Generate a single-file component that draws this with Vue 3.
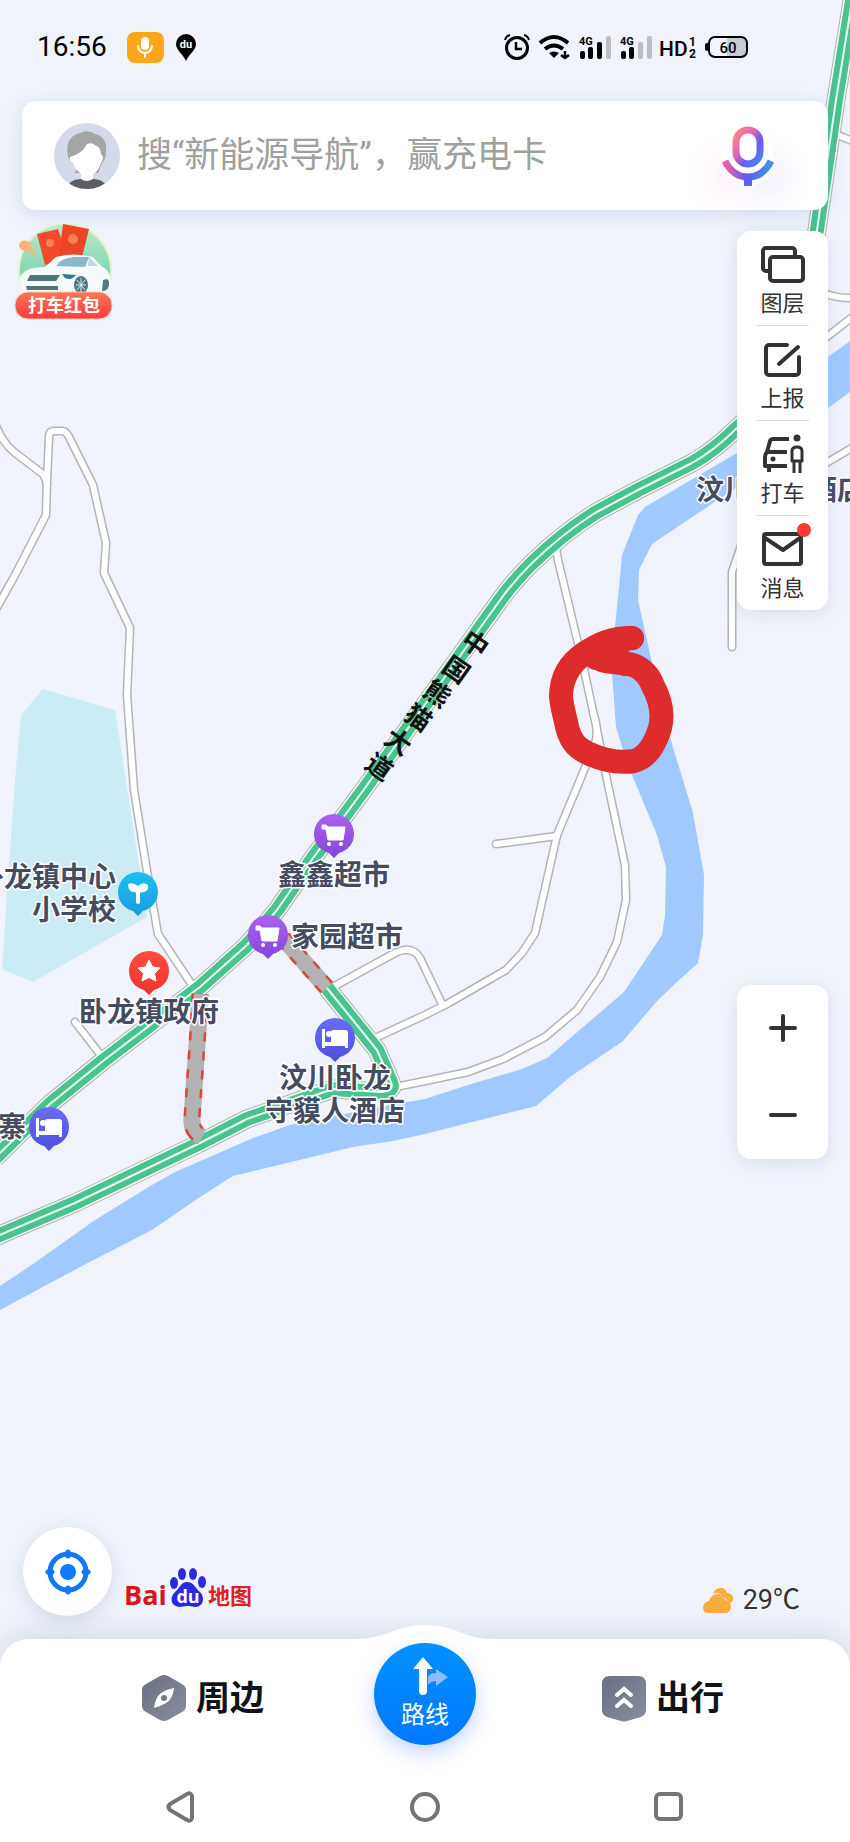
<script setup>
import { ref } from 'vue'

const keyword = ref('')

// 河流与学校区域
const river = '850,341 828,357 737,453 645,507 638,515 622,555 621,567 615,627 612,673 616,727 623,750 632,775 657,835 666,867 665,915 662,935 624,992 547,1058 522,1069 468,1085 425,1099 390,1105 290,1125 253,1138 175,1172 152,1185 95,1220 33,1264 0,1286 0,1310 80,1267 152,1230 197,1199 233,1176 353,1147 393,1141 425,1134 536,1106 570,1077 623,1041 657,1001 677,982 698,963 703,935 704,875 693,813 683,780 673,748 653,667 638,600 639,570 652,544 737,487 828,408 850,392'
const campus = '43,689 115,710 147,917 33,982 2,969 15,780 21,715'

// 小路
const lanes = [
  'M-4 426 Q3 443 14 452 L44 475 L47 484',
  'M-5 611 L14 577 L46 515 L47 480 L49 437 Q49 431 54 431 L62 431 Q66 431 69 437 L93 485 L106 543 L104 573 L130 628 L127 695 L134 790 L147 871 L158 934 L190 982',
  'M75 1022 L103 1058',
  'M556 548 L558 560 L582 660 L597 730 L607 780 L625 865 L626 900 L617 942 L600 977 L577 1010 L545 1037 L503 1059 L468 1072 L425 1081 L395 1087',
  'M594 715 Q599 733 595 743 L580 780 L557 835 L535 933 L522 953 L506 970 L447 1004 L425 1015 L373 1039',
  'M496 844 L557 836',
  'M333 987 L393 954 Q412 944 420 958 L442 1004',
  'M732 647 L732 572 L742 543',
  'M760 500 L828 462 L855 446',
  'M835 134 L855 142',
  'M815 290 Q835 299 855 298',
  'M800 358 L828 336 L855 315'
]

// 主干道
const highways = [
  'M853 -5 L836 100 L817 230 L790 360 Q770 400 737 428 Q715 450 692 463 L638 490 L595 513 Q562 534 532 563 Q512 583 498 603 L475 635 L365 788 L337 826 L313 858 L277 910 L247 945 L200 987 L103 1061 L50 1104 L-5 1158',
  'M-5 1237 L75 1203 L198 1144 L247 1119 L333 1089 L380 1092 Q395 1092 391 1082 L377 1050 L327 988'
]

// 封闭路段
const closed = [
  'M283 938 L327 988',
  'M200 994 L198 1030 L192 1118 Q191 1131 202 1137'
]

const roadName = [
  { char: '中', x: 475, y: 644 },
  { char: '国', x: 456, y: 670 },
  { char: '熊', x: 437, y: 694 },
  { char: '猫', x: 418, y: 718 },
  { char: '大', x: 398, y: 742 },
  { char: '道', x: 379, y: 767 }
]

const labels = [
  { text: '鑫鑫超市', x: 334, y: 885, anchor: 'middle' },
  { text: '家园超市', x: 291, y: 947, anchor: 'start' },
  { text: '卧龙镇中心', x: 116, y: 887, anchor: 'end' },
  { text: '小学校', x: 116, y: 920, anchor: 'end' },
  { text: '卧龙镇政府', x: 149, y: 1022, anchor: 'middle' },
  { text: '汶川卧龙', x: 335, y: 1088, anchor: 'middle' },
  { text: '守貘人酒店', x: 335, y: 1121, anchor: 'middle' },
  { text: '寨', x: 26, y: 1137, anchor: 'end' },
  { text: '汶川', x: 696, y: 500, anchor: 'start' },
  { text: '酒店', x: 809, y: 500, anchor: 'start' }
]

const pins = [
  { type: 'cart', x: 334, y: 834 },
  { type: 'cart', x: 268, y: 935 },
  { type: 'school', x: 138, y: 892 },
  { type: 'star', x: 149, y: 971 },
  { type: 'bed', x: 335, y: 1038 },
  { type: 'bed', x: 49, y: 1127 }
]

const tools = [
  { id: 'layers', name: '图层' },
  { id: 'report', name: '上报' },
  { id: 'taxi', name: '打车' },
  { id: 'message', name: '消息' }
]
</script>

<template>
  <div class="app">
    <!-- 地图 -->
    <svg class="map" viewBox="0 0 850 1842" preserveAspectRatio="xMidYMin slice">
      <defs>
        <linearGradient id="pin-cart" x1="0" y1="0" x2="0" y2="1">
          <stop offset="0" stop-color="#ac60f0" />
          <stop offset="1" stop-color="#8248d8" />
        </linearGradient>
        <linearGradient id="pin-school" x1="0" y1="0" x2="0" y2="1">
          <stop offset="0" stop-color="#1cc0ee" />
          <stop offset="1" stop-color="#1b9be0" />
        </linearGradient>
        <linearGradient id="pin-star" x1="0" y1="0" x2="0" y2="1">
          <stop offset="0" stop-color="#ff4c40" />
          <stop offset="1" stop-color="#ef3430" />
        </linearGradient>
        <linearGradient id="pin-bed" x1="0" y1="0" x2="0" y2="1">
          <stop offset="0" stop-color="#696cf8" />
          <stop offset="1" stop-color="#4c50dc" />
        </linearGradient>
      </defs>

      <polygon class="campus" :points="campus" />
      <polygon class="river" :points="river" />

      <path v-for="d in lanes" :key="'c' + d" class="lane-case" :d="d" />
      <path v-for="d in highways" :key="'c' + d" class="road-case" :d="d" />
      <path v-for="d in lanes" :key="'f' + d" class="lane" :d="d" />
      <path v-for="d in highways" :key="'w' + d" class="road-edge" :d="d" />
      <path v-for="d in highways" :key="'g' + d" class="road" :d="d" />
      <path v-for="d in highways" :key="'l' + d" class="road-line" :d="d" />
      <path v-for="d in closed" :key="'b' + d" class="closed-base" :d="d" />
      <path v-for="d in closed" :key="'r' + d" class="closed-dash" :d="d" />
      <path v-for="d in closed" :key="'f' + d" class="closed" :d="d" />

      <text
        v-for="item in roadName"
        :key="item.char"
        class="road-name"
        text-anchor="middle"
        :transform="`translate(${item.x} ${item.y}) rotate(35)`"
        dy="9"
      >{{ item.char }}</text>

      <text
        v-for="item in labels"
        :key="item.text"
        class="label"
        :x="item.x"
        :y="item.y"
        :text-anchor="item.anchor"
      >{{ item.text }}</text>

      <g v-for="(pin, i) in pins" :key="i" :transform="`translate(${pin.x} ${pin.y})`">
        <path :fill="`url(#pin-${pin.type})`" d="M-20 0 A20 20 0 1 1 20 0 C20 10 13 17 5 19 L0 24 L-5 19 C-13 17 -20 10 -20 0Z" />
        <g v-if="pin.type === 'cart'" fill="#fff">
          <path d="M-12 -9 H-8 L-6 -7 H11 L9 6 H-6 L-8 -5 H-12Z" stroke="#fff" stroke-width="1" stroke-linejoin="round" />
          <circle cx="-5" cy="10" r="2" />
          <circle cx="7" cy="10" r="2" />
        </g>
        <g v-else-if="pin.type === 'bed'" fill="#fff">
          <path d="M-13 -9 H-10 V4 H-4 V-6 Q-4 -8 -2 -8 H10 Q13 -8 13 -5 V10 H10 V8 H-10 V10 H-13Z" />
          <circle cx="-6" cy="-4" r="3" />
        </g>
        <g v-else-if="pin.type === 'school'">
          <path d="M-10 -8 Q-5 -10 0 -6 Q5 -11 10 -7 Q11 -1 6 0 Q2 1 0 0 Q-10 2 -10 -8Z" fill="#fff" />
          <path d="M0 -2 V10" stroke="#fff" stroke-width="4" stroke-linecap="round" />
        </g>
        <path v-else d="M0 -11 L3.5 -4 L11 -3 L5.500 2.500 L7 10 L0 6.500 L-7 10 L-5.500 2.500 L-11 -3 L-3.500 -4Z" fill="#fff" stroke="#fff" stroke-linejoin="round" />
      </g>

      <path class="scribble" d="M632 638 C612 638 600 643 585 653 C567 665 561 680 561 697 C562 708 565 716 567 727 C571 742 577 749 592 755 C606 761 620 763 634 761 C648 757 655 744 660 728 C664 712 659 697 653 686 C649 674 637 663 625 664 C615 662 608 662 602 660" />
      <path class="scribble" d="M590 652 Q610 640 632 638 M596 658 L622 661" />
    </svg>

    <header class="status">
      <span class="time">16:56</span>
      <svg class="rec" width="37" height="31" viewBox="0 0 37 31">
        <rect width="37" height="31" rx="8" fill="#fca61c" />
        <rect x="14" y="5" width="8" height="13" rx="4" fill="#fff" />
        <path d="M11 14 a7 7 0 0 0 14 0 M18 21 V25" fill="none" stroke="#fff" stroke-width="2" stroke-linecap="round" />
      </svg>
      <svg width="20" height="27" viewBox="0 0 20 27">
        <path d="M0 10 A10 10 0 0 1 20 10 C20 16 13 20 10 27 C7 20 0 16 0 10Z" />
        <text x="10" y="14" class="du-mini" text-anchor="middle">du</text>
      </svg>
      <div class="signals">
        <svg width="26" height="26" viewBox="0 0 26 26" fill="none" stroke="#000">
          <circle cx="13" cy="14" r="10.500" stroke-width="3" />
          <path d="M12 8 V15 H18" stroke-width="2.500" />
          <path d="M1 6 Q2 2 6 1 M20 1 Q24 2 25 6" stroke-width="2" />
        </svg>
        <svg width="31" height="26" viewBox="0 0 31 26" fill="none" stroke="#000" stroke-width="4">
          <path d="M1 9 Q15 -3 29 9" />
          <path d="M6 15 Q15 8 24 15" />
          <path d="M10 19 Q15 16 20 19 L15 24Z" fill="#000" stroke="none" />
          <path d="M26 17 V23 M22 21 L26 24 L30 21" stroke-width="2.500" />
        </svg>
        <svg v-for="bars in [3, 2]" :key="bars" width="32" height="26" viewBox="0 0 32 26">
          <text x="0" y="11" class="net">4G</text>
          <rect x="1" y="17" width="5" height="8" rx="2" />
          <rect x="9" y="13" width="5" height="12" rx="2" />
          <rect x="18" y="8" width="5" height="17" rx="2" :fill="bars > 2 ? '#000' : '#bdbec4'" />
          <rect x="27" y="2" width="5" height="23" rx="2" fill="#bdbec4" />
        </svg>
        <svg width="35" height="26" viewBox="0 0 35 26">
          <text x="-2" y="22" class="hd">HD</text>
          <text x="28" y="12" class="sim">1</text>
          <text x="28" y="24" class="sim">2</text>
        </svg>
        <svg width="44" height="24" viewBox="0 0 44 24">
          <path d="M22 3 H36 Q41 3 41 8 V16 Q41 21 36 21 H22Z" fill="#c9cad0" />
          <rect x="4" y="2" width="38" height="20" rx="6" fill="none" stroke="#000" stroke-width="2" />
          <rect x="0" y="8" width="4" height="8" rx="2" />
          <text x="23" y="18" class="battery" text-anchor="middle">60</text>
        </svg>
      </div>
    </header>

    <form class="search" @submit.prevent>
      <svg class="avatar" viewBox="0 0 66 66">
        <defs>
          <clipPath id="avatar-clip"><circle cx="33" cy="33" r="33" /></clipPath>
        </defs>
        <g clip-path="url(#avatar-clip)">
          <rect width="66" height="66" fill="#d4daea" />
          <path d="M12 66 Q16 56 26 56 H40 Q50 56 54 66Z" fill="#5c5d5f" />
          <path d="M14 34 Q10 14 26 10 Q34 6 41 11 Q54 14 52 30 Q52 36 48 40 L44 50 H20 Q25 47 20 42 Q16 38 14 34Z" fill="#a5a5a5" />
          <path d="M16 34 Q28 31 33 21 Q39 19 42 23 Q46 23 47 31 Q51 34 47 40 Q44 49 39 51 V56 Q33 60 27 56 V51 Q20 45 19 40 Q15 38 16 34Z" fill="#fff" />
        </g>
      </svg>
      <input v-model="keyword" type="text" aria-label="搜索" placeholder="搜“新能源导航”，赢充电卡">
      <button class="voice" type="button" aria-label="语音">
        <svg width="52" height="60" viewBox="0 0 52 60" fill="none">
          <defs>
            <linearGradient id="mic" x1="0" y1="0" x2="1" y2="1">
              <stop offset="0" stop-color="#ff8a80" />
              <stop offset=".35" stop-color="#e866b0" />
              <stop offset=".65" stop-color="#6a5af5" />
              <stop offset="1" stop-color="#3e8ef0" />
            </linearGradient>
            <linearGradient id="mic-base" x1="0" y1="0" x2="1" y2="0">
              <stop offset="0" stop-color="#f060a8" />
              <stop offset=".45" stop-color="#6756f0" />
              <stop offset="1" stop-color="#3e96e8" />
            </linearGradient>
          </defs>
          <rect x="14" y="4" width="24" height="34" rx="12" stroke="url(#mic)" stroke-width="7" />
          <path d="M3 35 Q11 51 26 51 Q41 51 49 35" stroke="url(#mic-base)" stroke-width="7" />
          <rect x="22" y="52" width="8" height="8" fill="#5a63f3" />
        </svg>
      </button>
    </form>

    <main class="body">
      <button class="promo" type="button">
        <svg width="100" height="100" viewBox="0 0 100 100">
          <defs>
            <linearGradient id="promo-bg" x1="0" y1="0" x2="0" y2="1">
              <stop offset="0" stop-color="#bdeac8" />
              <stop offset="1" stop-color="#4fc5a4" />
            </linearGradient>
            <linearGradient id="ribbon" x1="0" y1="0" x2="0" y2="1">
              <stop offset="0" stop-color="#ff7553" />
              <stop offset="1" stop-color="#f93d3f" />
            </linearGradient>
          </defs>
          <circle cx="52" cy="49" r="46" fill="url(#promo-bg)" stroke="#e0f3c8" stroke-width="2" />
          <path d="M6 24 Q8 18 14 20 Q18 21 18 25 L24 34 L12 30 Q6 29 6 24Z" fill="#fbb578" />
          <path d="M24 13 L45 8 L55 38 L32 44Z" fill="#f4492f" />
          <path d="M50 3 L76 8 L68 40 L46 34Z" fill="#ee4526" />
          <circle cx="37" cy="22" r="4" fill="#fb8152" />
          <circle cx="60" cy="18" r="5" fill="#fb8152" />
          <path d="M8 54 Q14 46 32 46 L43 36 Q60 31 80 36 L88 45 Q99 50 98 63 L92 72 H10 Q5 62 8 54Z" fill="#f4fbfa" />
          <path d="M43 45 Q48 37 61 36 L76 36 L72 46Z" fill="#89b8c6" />
          <path d="M76 36 L85 45 H75Z" fill="#bddade" />
          <path d="M17 54 H47 L43 60 H14Z M13 65 H45 V69 H14Z" fill="#50757b" />
          <path d="M49 53 L63 54 Q58 60 52 57Z" fill="#287d89" />
          <ellipse cx="68" cy="64" rx="7" ry="9" fill="#4c7680" />
          <path d="M68 57 V71 M63 64 H73 M64 59 L72 69 M72 59 L64 69" stroke="#dce9e9" stroke-width="1" />
          <path d="M90 59 Q97 56 96 64 Q95 70 89 70Z" fill="#547a82" />
          <rect x="2" y="71" width="97" height="27" rx="13" fill="url(#ribbon)" stroke="#ffc8a8" stroke-width="1" />
          <text x="51" y="91" class="promo-text" text-anchor="middle">打车红包</text>
        </svg>
      </button>

      <div class="side">
        <nav class="card tools">
          <button v-for="tool in tools" :key="tool.id" class="tool" type="button">
            <svg width="46" height="40" viewBox="0 0 46 40" fill="none" stroke="#333" stroke-width="4" stroke-linecap="round" stroke-linejoin="round">
              <g v-if="tool.id === 'layers'">
                <path d="M9 26 H6 a3 3 0 0 1 -3 -3 V6 a3 3 0 0 1 3 -3 H32 a3 3 0 0 1 3 3 V11" />
                <rect x="10" y="12" width="33" height="24" rx="3" />
              </g>
              <g v-else-if="tool.id === 'report'">
                <path d="M27 5 H9 a3 3 0 0 0 -3 3 V32 a3 3 0 0 0 3 3 H36 a3 3 0 0 0 3 -3 V17" />
                <path d="M19 24 L38 7" />
              </g>
              <g v-else-if="tool.id === 'taxi'" stroke-linecap="butt">
                <path d="M29 4 H13 Q11 4 10 6 L7 17 Q5 19 5 22 V31 H27 M8 17 H27 M9 31 V37" />
                <circle cx="13" cy="24" r="2.500" fill="#333" stroke="none" />
                <circle cx="37" cy="3" r="3.500" fill="#333" stroke="none" />
                <path d="M34 38 V26 H32 V16 Q32 12 37 12 Q42 12 42 16 V26 H40 V38 M34 26 H40" stroke-width="3" />
              </g>
              <g v-else>
                <rect x="4" y="4" width="37" height="30" rx="2" />
                <path d="M5 8 L23 20 L40 8" />
                <circle cx="44" cy="0" r="7" fill="#fb3b32" stroke="none" />
              </g>
            </svg>
            <span>{{ tool.name }}</span>
          </button>
        </nav>

        <div class="card zoom">
          <button type="button" aria-label="放大">
            <svg width="28" height="28" viewBox="0 0 28 28"><path d="M2 14 H26 M14 2 V26" /></svg>
          </button>
          <button type="button" aria-label="缩小">
            <svg width="28" height="28" viewBox="0 0 28 28"><path d="M2 14 H26" /></svg>
          </button>
        </div>
      </div>
    </main>

    <div class="bottom-row">
      <button class="locate" type="button" aria-label="定位">
        <svg width="46" height="46" viewBox="0 0 46 46" fill="none" stroke="#1278f5">
          <circle cx="23" cy="23" r="18" stroke-width="5" />
          <circle cx="23" cy="23" r="8" fill="#0f7bff" stroke="none" />
          <path d="M23 3 V7 M23 39 V43 M3 23 H7 M39 23 H43" stroke-width="5" stroke-linecap="round" />
        </svg>
      </button>
      <svg class="logo" width="128" height="40" viewBox="0 0 128 40">
        <text x="-1" y="37" class="logo-bai">Bai</text>
        <g fill="#2929e0">
          <ellipse cx="49" cy="15" rx="4" ry="6" />
          <ellipse cx="57" cy="6" rx="4" ry="6" />
          <ellipse cx="68" cy="6" rx="4" ry="6" />
          <ellipse cx="77" cy="14" rx="4" ry="6" />
          <path d="M62 14 C69 14 70 20 75 24 C80 29 79 38 71 39 C67 39 66 38 63 38 C59 38 58 39 54 39 C46 38 44 30 50 24 C55 20 56 14 62 14Z" />
        </g>
        <text x="63" y="35" class="logo-du" text-anchor="middle">du</text>
        <text x="83" y="36" class="logo-map">地图</text>
      </svg>
      <div class="weather">
        <svg width="31" height="27" viewBox="0 0 31 27" fill="#fbac3c">
          <path d="M10 7 Q12 0 19 1 Q23 2 24 6 Q31 7 30 13 Q29 16 26 16 Q24 11 20 10 Q16 4 10 7Z" />
          <path d="M6 14 Q8 7 15 7 Q20 8 22 13 Q28 14 28 20 Q27 26 22 26 H6 Q0 26 0 20 Q1 15 6 14Z" />
        </svg>
        <span>29℃</span>
      </div>
    </div>

    <footer class="sheet">
      <svg class="bump" width="140" height="14" viewBox="0 0 140 14">
        <path d="M0 14 C34 14 38 0 70 0 C102 0 106 14 140 14Z" fill="#fff" />
      </svg>
      <nav class="tabs">
        <button class="tab nearby" type="button">
          <svg width="44" height="48" viewBox="0 0 44 48">
            <defs>
              <linearGradient id="slate" x1="0" y1="0" x2="1" y2="1">
                <stop offset="0" stop-color="#6b7080" />
                <stop offset="1" stop-color="#898e9f" />
              </linearGradient>
            </defs>
            <path d="M18 2 Q22 0 26 2 L40 10 Q44 12 44 16 V32 Q44 36 40 38 L26 46 Q22 48 18 46 L4 38 Q0 36 0 32 V16 Q0 12 4 10Z" fill="url(#slate)" />
            <path d="M32 14 Q31 25 24 29 Q19 32 12 34 Q13 24 19 19 Q25 15 32 14Z" fill="#fff" />
            <circle cx="22" cy="24" r="3" fill="#747989" />
          </svg>
          周边
        </button>
        <button class="route" type="button">
          <svg width="48" height="38" viewBox="-11 0 48 38">
            <path d="M16 20 Q18 16 24 16 V12 L36 20 L24 29 V24 Q19 24 16 28Z" fill="#8bbdff" />
            <path d="M11 0 L21 12 H15 V34 Q15 38 11 38 Q7 38 7 34 V12 H1Z" fill="#fff" />
          </svg>
          <span>路线</span>
        </button>
        <button class="tab" type="button">
          <svg width="44" height="48" viewBox="0 0 44 48">
            <path d="M8 2 H36 Q44 2 44 10 V36 Q44 41 39 43 L25 47 Q22 48 19 47 L5 43 Q0 41 0 36 V10 Q0 2 8 2Z" fill="url(#slate)" />
            <path d="M15 21 L22 15 L29 21 M15 32 L22 26 L29 32" fill="none" stroke="#fff" stroke-width="4" stroke-linecap="round" />
          </svg>
          出行
        </button>
      </nav>
      <div class="system">
        <button type="button" aria-label="返回">
          <svg width="32" height="32" viewBox="0 0 32 32"><path d="M27 5 V27 Q26 31 22 29 L5 19 Q2 16 5 13 L22 3 Q26 1 27 5Z" /></svg>
        </button>
        <button type="button" aria-label="主页">
          <svg width="32" height="32" viewBox="0 0 32 32"><circle cx="16" cy="16" r="13" /></svg>
        </button>
        <button type="button" aria-label="最近任务">
          <svg width="32" height="32" viewBox="0 0 32 32"><rect x="3" y="3" width="25" height="25" rx="4" /></svg>
        </button>
      </div>
    </footer>
  </div>
</template>

<style>
body {
  margin: 0;
}
</style>

<style scoped>
.app {
  position: relative;
  display: flex;
  flex-direction: column;
  min-height: 100vh;
  overflow: hidden;
  background: #f0f3fb;
  color: #333;
  font-family: Roboto, "Noto Sans CJK SC", sans-serif;
}

.app > :not(.map) {
  position: relative;
}

button {
  padding: 0;
  border: none;
  background: none;
  color: inherit;
  font-family: inherit;
  cursor: pointer;
}

svg {
  display: block;
  flex-shrink: 0;
  overflow: visible;
}

/* 地图 */
.map {
  position: absolute;
  inset: 0;
  width: 100%;
  height: 100%;
  overflow: hidden;
}

.map path {
  stroke-linejoin: round;
}

.campus { fill: #cbebf5; }
.river { fill: #a0caff; }

.lane-case,
.lane,
.road-case,
.road-edge,
.road,
.road-line,
.closed-base,
.closed-dash,
.closed,
.scribble {
  fill: none;
}

.lane-case {
  stroke: #b4b4b6;
  stroke-width: 9;
  stroke-linecap: round;
}

.lane {
  stroke: #fff;
  stroke-width: 6;
  stroke-linecap: round;
}

.road-case {
  stroke: #b5b0b0;
  stroke-width: 19;
}

.road-edge {
  stroke: #f4fffa;
  stroke-width: 17;
}

.road {
  stroke: #49c38f;
  stroke-width: 14;
}

.road-line {
  stroke: #e9fff5;
  stroke-width: 2;
}

.closed-base {
  stroke: #b2b0b0;
  stroke-width: 17;
}

.closed-dash {
  stroke: #d9463c;
  stroke-width: 17;
  stroke-dasharray: 9 10;
}

.closed {
  stroke: #b2b2b2;
  stroke-width: 12;
}

.scribble {
  stroke: #de2b2c;
  stroke-width: 24;
  stroke-linecap: round;
}

.road-name {
  fill: #111;
  font-size: 26px;
  font-weight: 700;
}

.label {
  fill: #454c5f;
  stroke: #fff;
  stroke-width: 3px;
  stroke-linejoin: round;
  paint-order: stroke;
  font-size: 28px;
  font-weight: 700;
}

/* 状态栏 */
.status {
  display: flex;
  align-items: center;
  height: 32px;
  padding: 31px 101px 38px 37px;
  color: #000;
}

.time {
  font-size: 28px;
  line-height: 32px;
  font-weight: 400;
}

.rec {
  margin: 0 12px 0 20px;
}

.signals {
  display: flex;
  align-items: center;
  gap: 9px;
  margin-left: auto;
}

.du-mini {
  fill: #fff;
  font-size: 11px;
  font-weight: 700;
}

.net {
  font-size: 11px;
  font-weight: 700;
}

.hd {
  font-family: "Liberation Sans Narrow", Roboto, sans-serif;
  font-size: 21px;
  font-weight: 500;
}

.sim {
  font-size: 12px;
  font-weight: 700;
}

.battery {
  font-size: 15px;
  font-weight: 500;
}

/* 搜索框 */
.search {
  display: flex;
  align-items: center;
  margin: 0 22px;
  padding: 21px 32px;
  border-radius: 14px;
  background: #fff;
  box-shadow: 0 4px 18px rgba(120, 150, 200, .25);
}

.avatar {
  width: 66px;
  height: 66px;
}

.search input {
  flex: 1;
  min-width: 0;
  height: 67px;
  padding: 0 17px;
  border: none;
  outline: none;
  background: none;
  color: #333;
  font-family: inherit;
  font-size: 35px;
  font-weight: 400;
}

.search input::placeholder {
  color: #a0a0a0;
  opacity: 1;
}

.voice {
  margin-right: 22px;
  border-radius: 50%;
  box-shadow: -20px 20px 30px -12px rgba(255, 130, 190, .18), 20px 20px 30px -12px rgba(110, 130, 255, .18);
}

/* 主体 */
.body {
  display: flex;
  flex: 1;
  justify-content: space-between;
  padding: 11px 22px 0 13px;
}

.promo {
  align-self: flex-start;
}

.promo-text {
  fill: #fff;
  font-size: 18px;
  font-weight: 700;
}

.side {
  display: flex;
  flex-direction: column;
  justify-content: space-between;
  width: 91px;
  padding: 10px 0 20vh;
}

.card {
  display: flex;
  flex-direction: column;
  align-items: center;
  border-radius: 14px;
  background: #fff;
  box-shadow: 0 4px 18px rgba(120, 140, 180, .2);
}

.tool {
  display: flex;
  flex-direction: column;
  align-items: center;
  gap: 6px;
  width: 52px;
  padding: 14px 0 8px;
  font-size: 22px;
  line-height: 26px;
}

.tool + .tool {
  border-top: 1px solid #ddd;
}

.zoom button {
  display: grid;
  place-items: center;
  width: 91px;
  height: 87px;
}

.zoom path {
  stroke: #333;
  stroke-width: 4;
  stroke-linecap: round;
}

/* 底部悬浮行 */
.bottom-row {
  display: flex;
  align-items: flex-end;
  padding: 0 50px 23px 23px;
}

.locate {
  display: grid;
  place-items: center;
  width: 89px;
  height: 89px;
  border-radius: 50%;
  background: #fff;
  box-shadow: 0 4px 18px rgba(120, 140, 180, .25);
}

.logo {
  margin: 0 0 8px 13px;
}

.logo-bai {
  fill: #dc1318;
  font-family: "Open Sans", Roboto, sans-serif;
  font-size: 27px;
  font-weight: 700;
}

.logo-du {
  fill: #fff;
  font-family: "Open Sans", Roboto, sans-serif;
  font-size: 18px;
  font-weight: 700;
}

.logo-map {
  fill: #dc1f25;
  font-size: 22px;
  font-weight: 700;
}

.weather {
  display: flex;
  align-items: center;
  gap: 9px;
  margin-left: auto;
  font-size: 27px;
  line-height: 32px;
  text-shadow: 0 0 3px #fff;
}

/* 底部面板 */
.sheet {
  border-radius: 28px 28px 0 0;
  background: #fff;
  box-shadow: 0 -6px 30px rgba(120, 130, 170, .22);
}

.bump {
  position: absolute;
  left: 50%;
  bottom: 100%;
  transform: translateX(-50%);
}

.tabs {
  display: grid;
  grid-template-columns: 1fr 102px 1fr;
  align-items: center;
  padding: 4px 0 46px;
}

.tab {
  display: flex;
  align-items: center;
  justify-content: center;
  gap: 10px;
  padding-top: 8px;
  color: #111318;
  font-size: 34px;
  line-height: 48px;
  font-weight: 700;
}

.nearby {
  padding-left: 32px;
}

.route {
  display: flex;
  flex-direction: column;
  align-items: center;
  gap: 4px;
  height: 102px;
  padding-top: 14px;
  border-radius: 50%;
  background: linear-gradient(#0091ff, #0078ff);
  box-shadow: 0 8px 20px rgba(60, 120, 255, .3);
  color: #fff;
  font-size: 24px;
  line-height: 32px;
}

.system {
  display: grid;
  grid-template-columns: repeat(3, 1fr);
  padding: 0 59px 19px;
}

.system button {
  display: grid;
  place-items: center;
}

.system svg {
  fill: none;
  stroke: #747474;
  stroke-width: 4;
}
</style>
